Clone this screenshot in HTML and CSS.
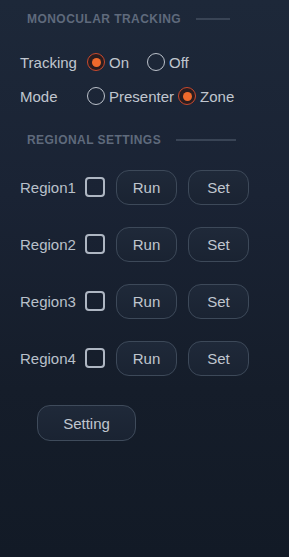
FILE: index.html
```html
<!DOCTYPE html>
<html>
<head>
<meta charset="utf-8">
<link rel="stylesheet" href="styles.css">
</head>
<body>
<div class="panel">
  <div class="section-title title-mono"><span>MONOCULAR TRACKING</span><i class="rule rule-mono"></i></div>

  <div class="radio-row row-tracking">
    <span class="row-label">Tracking</span>
    <label class="option"><span class="radio checked"></span><span>On</span></label>
    <label class="option"><span class="radio"></span><span>Off</span></label>
  </div>
  <div class="radio-row row-mode">
    <span class="row-label">Mode</span>
    <label class="option"><span class="radio"></span><span>Presenter</span></label>
    <label class="option"><span class="radio checked"></span><span>Zone</span></label>
  </div>

  <div class="section-title title-region"><span>REGIONAL SETTINGS</span><i class="rule rule-region"></i></div>

  <div class="regions">
    <div class="region-row">
      <span class="region-label">Region1</span>
      <span class="checkbox"></span>
      <button class="btn">Run</button>
      <button class="btn">Set</button>
    </div>
    <div class="region-row">
      <span class="region-label">Region2</span>
      <span class="checkbox"></span>
      <button class="btn">Run</button>
      <button class="btn">Set</button>
    </div>
    <div class="region-row">
      <span class="region-label">Region3</span>
      <span class="checkbox"></span>
      <button class="btn">Run</button>
      <button class="btn">Set</button>
    </div>
    <div class="region-row">
      <span class="region-label">Region4</span>
      <span class="checkbox"></span>
      <button class="btn">Run</button>
      <button class="btn">Set</button>
    </div>
  </div>

  <button class="btn btn-setting">Setting</button>
</div>
</body>
</html>
```
FILE: styles.css
```css
html, body {
  margin: 0;
  padding: 0;
}
body {
  width: 289px;
  height: 557px;
  overflow: hidden;
  background: linear-gradient(180deg, #1d2839 0%, #1a2334 35%, #151d2a 70%, #121a26 100%);
  font-family: "Liberation Sans", Arial, sans-serif;
  color: #c0c6cf;
}
.panel {
  display: flex;
  flex-direction: column;
  align-items: flex-start;
}
.section-title {
  display: flex;
  align-items: center;
  padding-left: 27px;
  height: 14px;
  font-size: 12px;
  font-weight: bold;
  letter-spacing: 0.45px;
  color: #5f6a7c;
  line-height: 14px;
}
.title-mono { margin-top: 12px; }
.title-region { margin-top: 25px; }
.rule {
  display: block;
  height: 2px;
  background: #394455;
}
.rule-mono { width: 34px; margin-left: 15px; }
.rule-region { width: 60px; margin-left: 15px; }

.radio-row {
  display: flex;
  align-items: center;
  height: 24px;
  padding-left: 20px;
  font-size: 15px;
}
.row-tracking { margin-top: 24px; }
.row-mode { margin-top: 10px; }
.row-label {
  width: 67px;
}
.option {
  display: flex;
  align-items: center;
  gap: 4px;
  min-width: 56px;
  margin-right: 4px;
}
.radio {
  box-sizing: border-box;
  width: 18px;
  height: 18px;
  border-radius: 50%;
  border: 1.5px solid #bcc2cb;
  display: flex;
  align-items: center;
  justify-content: center;
}
.radio.checked {
  border: 1.5px solid #c9492d;
  background: #2a1d20;
}
.radio.checked::after {
  content: "";
  width: 9px;
  height: 9px;
  border-radius: 50%;
  background: #f06a2c;
}

.regions {
  display: flex;
  flex-direction: column;
  gap: 21px;
  margin-top: 22px;
}
.region-row {
  display: flex;
  align-items: center;
  padding-left: 20px;
  height: 36px;
  font-size: 15px;
}
.region-label {
  width: 65px;
  color: #b9c0ca;
}
.checkbox {
  box-sizing: border-box;
  width: 20px;
  height: 20px;
  border: 2px solid #aeb6c2;
  border-radius: 4px;
  margin-right: 11px;
}
.btn {
  box-sizing: border-box;
  width: 61px;
  height: 35px;
  border: 1px solid #3d4959;
  border-radius: 13px;
  background: linear-gradient(180deg, #1f2939 0%, #1a2332 100%);
  color: #c0c6cf;
  font-family: "Liberation Sans", Arial, sans-serif;
  font-size: 15px;
  padding: 0;
  margin-right: 11px;
}
.btn-setting {
  width: 99px;
  height: 36px;
  margin-top: 29px;
  margin-left: 37px;
  margin-right: 0;
  border-color: #3f4b5b;
}
```
